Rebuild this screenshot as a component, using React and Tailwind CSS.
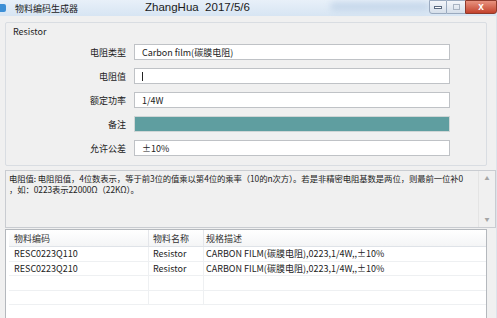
import React from "react";

const font = { fontFamily: '"Noto Sans CJK SC", "Microsoft YaHei", sans-serif' };

function Field({ label, value, teal, caret }) {
  return (
    <div className="flex items-center h-[16px] mb-[8px]">
      <div className="w-[120px] text-right text-[9px] leading-none text-[#222]">{label}</div>
      <div
        className={
          "ml-[8px] w-[316px] h-[16px] flex items-center pl-[7px] text-[9px] leading-none text-[#222] border " +
          (teal ? "bg-[#5f9ea0] border-[#cfd6d6]" : "bg-white border-[#bfc2c6]")
        }
      >
        {caret ? <span className="inline-block w-px h-[9px] bg-[#222]" /> : value}
      </div>
    </div>
  );
}

export default function App() {
  const rows = [
    ["RESC0223Q110", "Resistor", "CARBON FILM(碳膜电阻),0223,1/4W,,±10%"],
    ["RESC0223Q210", "Resistor", "CARBON FILM(碳膜电阻),0223,1/4W,,±10%"],
    ["", "", ""],
    ["", "", ""],
  ];
  return (
    <div className="w-[497px] h-[318px] overflow-hidden bg-[#f0f0f0] flex flex-col" style={font}>
      {/* title bar */}
      <div className="h-[16px] flex items-center bg-gradient-to-b from-[#e8f0f9] to-[#d7e5f3] relative shrink-0">
        <div className="w-[6px] h-[8px] bg-[#3d8fd6] rounded-r-[2px] mr-[9px]" />
        <span className="text-[9px] leading-none text-[#1a1a1a]">物料编码生成器</span>
        <span
          className="ml-[67px] text-[11.5px] leading-none text-[#1a1a1a]"
          style={{ fontFamily: '"Liberation Sans", Arial, sans-serif' }}
        >
          ZhangHua&nbsp;&nbsp;2017/5/6
        </span>
        <div className="absolute left-[330px] top-[2px] w-[100px] h-[9px] rounded-full bg-[#bcd0e6] blur-[3px] opacity-70" />
        <div className="absolute right-0 top-0 flex h-[14px]">
          <div className="w-[18px] h-[14px] border border-[#9aaabf] rounded-bl-[3px] bg-gradient-to-b from-[#f3f6fa] to-[#d5dfea] flex items-center justify-center">
            <div className="w-[8px] h-[3px] bg-white border border-[#5a6a80]" />
          </div>
          <div className="w-[18px] h-[14px] border-y border-[#9aaabf] bg-gradient-to-b from-[#f3f6fa] to-[#d5dfea] flex items-center justify-center">
            <div className="w-[7px] h-[6px] border border-[#a9b4c2]" />
          </div>
          <div className="w-[32px] h-[14px] bg-gradient-to-b from-[#e8927f] to-[#c2412b] border border-[#8e3a2c] rounded-br-[3px] flex items-center justify-center">
            <span className="text-white text-[10px] font-bold leading-none" style={{ fontFamily: '"Liberation Sans", sans-serif' }}>x</span>
          </div>
        </div>
      </div>

      {/* body */}
      <div className="flex-1 flex flex-col pl-[5px] pr-[9px] pt-[6px] border-r border-[#dde3ea]">
        {/* group box */}
        <div className="h-[144px] border border-[#d9dde2] rounded-[2px] pt-[4px] shrink-0">
          <div className="pl-[7px] text-[9px] leading-none text-[#222] h-[17px]">Resistor</div>
          <Field label="电阻类型" value="Carbon film(碳膜电阻)" />
          <Field label="电阻值" caret />
          <Field label="额定功率" value="1/4W" />
          <Field label="备注" teal />
          <Field label="允许公差" value="±10%" />
        </div>

        {/* description */}
        <div className="mt-[4px] h-[58px] -mr-[9px] flex border border-[#c9ccd1] bg-[#f0f0f0] shrink-0">
          <div className="flex-1 min-w-0 pl-[3px] pt-[2px] text-[8.4px] tracking-[-0.1px] leading-[11px] text-[#222] whitespace-nowrap overflow-hidden">
            <div>电阻值: 电阻阻值，4位数表示，等于前3位的值乘以第4位的乘率（10的n次方）。若是非精密电阻基数是两位，则最前一位补0</div>
            <div>，如：0223表示22000Ω（22KΩ）。</div>
          </div>
          <div className="w-[17px] shrink-0 border-l border-[#e4e4e4] flex flex-col items-center justify-between pt-[4px] pb-[6px] text-[5px] text-[#a5a5a5] leading-none">
            <span>▲</span>
            <span>▼</span>
          </div>
        </div>

        {/* table */}
        <div className="mt-[1px] flex-1 bg-white border border-[#b4b8bd] border-b-0 flex flex-col pl-[3px]">
          <div className="h-[17px] flex text-[9px] leading-none text-[#333] bg-gradient-to-b from-white to-[#f4f5f6] border-b border-[#dfe3e8]">
            <div className="w-[140px] pl-[5px] flex items-center border-r border-[#e4e6ea]">物料编码</div>
            <div className="w-[55px] pl-[4px] flex items-center border-r border-[#e4e6ea]">物料名称</div>
            <div className="flex-1 pl-[2px] flex items-center">规格描述</div>
          </div>
          {rows.map((r, i) => (
            <div key={i} className="h-[14.5px] flex text-[9px] leading-none text-[#222] border-b border-[#eef0f2]">
              <div className="w-[140px] pl-[5px] flex items-center border-r border-[#eef0f2]">{r[0]}</div>
              <div className="w-[55px] pl-[4px] flex items-center border-r border-[#eef0f2]">{r[1]}</div>
              <div className="flex-1 pl-[2px] flex items-center">{r[2]}</div>
            </div>
          ))}
        </div>
      </div>
    </div>
  );
}
